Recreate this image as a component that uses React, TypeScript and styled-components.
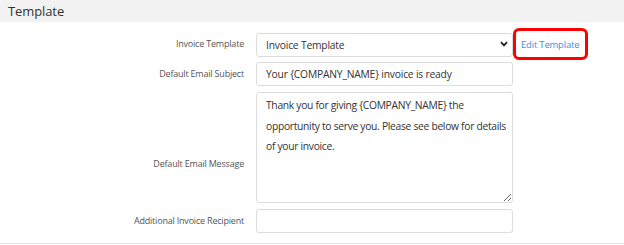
import React from "react";
import styled, { createGlobalStyle } from "styled-components";

const Global = createGlobalStyle`
  html, body { margin: 0; padding: 0; background: #ffffff; }
  body { font-family: "Open Sans", "Noto Sans", sans-serif; color: #333; }
`;

const Section = styled.section`
  width: 624px;
  border-bottom: 1px solid #e6e6e6;
`;

const Header = styled.div`
  height: 22px;
  background: #f2f2f2;
  padding-left: 8px;
  font-size: 13px;
  letter-spacing: -0.1px;
  line-height: 22px;
  color: #333;
`;

const Form = styled.div`
  display: grid;
  grid-template-columns: 244px 257px auto;
  column-gap: 12px;
  row-gap: 6px;
  padding: 10px 0 10px 0;
  align-items: start;
`;

const Label = styled.label<{ $offset?: number }>`
  text-align: right;
  font-size: 9px;
  letter-spacing: -0.2px;
  color: #555;
  line-height: 24px;
  padding-top: ${(p) => p.$offset ?? 0}px;
`;

const SelectWrap = styled.div`
  position: relative;
  width: 257px;
  height: 24px;
`;

const Select = styled.select`
  appearance: none;
  height: 24px;
  width: 257px;
  box-sizing: border-box;
  border: 1px solid #dcdcdc;
  border-radius: 3px;
  background: #fff;
  padding: 0 9px;
  font-family: inherit;
  font-size: 10.3px;
  letter-spacing: -0.2px;
  color: #333;
`;

const Chevron = styled.svg`
  position: absolute;
  right: 5px;
  top: 9px;
  width: 8px;
  height: 6px;
  pointer-events: none;
`;

const Input = styled.input`
  height: 24px;
  width: 257px;
  box-sizing: border-box;
  border: 1px solid #dcdcdc;
  border-radius: 3px;
  padding: 0 9px;
  font-family: inherit;
  font-size: 10.3px;
  letter-spacing: -0.2px;
  color: #333;
`;

const TextArea = styled.textarea`
  height: 111px;
  width: 257px;
  box-sizing: border-box;
  border: 1px solid #dcdcdc;
  border-radius: 3px;
  padding: 2px 2px 2px 9px;
  font-family: inherit;
  font-size: 10.3px;
  letter-spacing: -0.3px;
  line-height: 20.5px;
  color: #333;
`;

const LinkCell = styled.div`
  position: relative;
  height: 24px;
  display: flex;
  align-items: center;
  padding-left: 8px;
  margin-left: -12px;
`;

const EditLink = styled.a`
  font-size: 9.5px;
  letter-spacing: -0.2px;
  color: #3d8ee0;
  text-decoration: none;
`;

const Highlight = styled.span`
  position: absolute;
  left: 0;
  top: -4px;
  width: 75px;
  height: 32px;
  box-sizing: border-box;
  border: 3px solid #f00;
  border-radius: 6px;
  pointer-events: none;
`;

const Empty = styled.div``;

export default function App() {
  return (
    <>
      <Global />
      <Section>
        <Header>Template</Header>
        <Form>
          <Label>Invoice Template</Label>
          <SelectWrap>
            <Select defaultValue="invoice">
              <option value="invoice">Invoice Template</option>
            </Select>
            <Chevron viewBox="0 0 8 6">
              <path d="M1 1.2 L4 4.4 L7 1.2" fill="none" stroke="#222" strokeWidth="1.8" />
            </Chevron>
          </SelectWrap>
          <LinkCell>
            <EditLink href="#">Edit Template</EditLink>
            <Highlight />
          </LinkCell>

          <Label>Default Email Subject</Label>
          <Input defaultValue="Your {COMPANY_NAME} invoice is ready" />
          <Empty />

          <Label $offset={60}>Default Email Message</Label>
          <TextArea defaultValue="Thank you for giving {COMPANY_NAME} the opportunity to serve you. Please see below for details of your invoice." />
          <Empty />

          <Label>Additional Invoice Recipient</Label>
          <Input defaultValue="" />
          <Empty />
        </Form>
      </Section>
    </>
  );
}
